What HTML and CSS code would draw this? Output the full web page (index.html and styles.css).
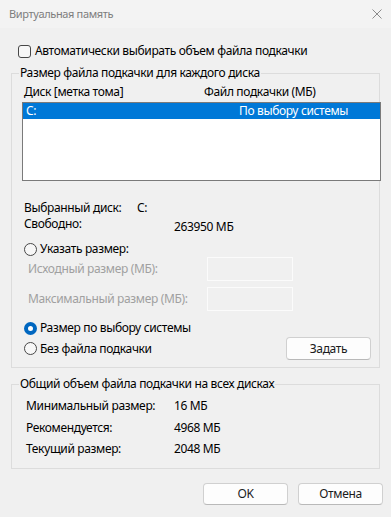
FILE: index.html
```html
<!DOCTYPE html>
<html lang="ru">
<head>
	<meta charset="UTF-8">
	<title>Виртуальная память</title>
	<link rel="stylesheet" href="styles.css">
</head>
<body>
	<div class="window">
		<div class="titlebar">
			<span class="title">Виртуальная память</span>
			<svg class="close" width="10" height="10" viewBox="0 0 10 10">
				<path d="M0.5 0.5 L9.5 9.5 M9.5 0.5 L0.5 9.5" stroke="#8b8b8b" stroke-width="1" fill="none"/>
			</svg>
		</div>
		<div class="dialog">
			<div class="check-row">
				<span class="checkbox"></span>
				<span>Автоматически выбирать объем файла подкачки</span>
			</div>

			<fieldset class="group group-drives">
				<legend>Размер файла подкачки для каждого диска</legend>
				<div class="list-head">
					<span class="col-drive">Диск [метка тома]</span>
					<span>Файл подкачки (МБ)</span>
				</div>
				<div class="listbox">
					<div class="list-row selected">
						<span class="cell-drive">C:</span>
						<span>По выбору системы</span>
					</div>
				</div>

				<div class="info-row first">
					<span class="info-label short">Выбранный диск:</span>
					<span>C:</span>
				</div>
				<div class="info-row">
					<span class="info-label wide">Свободно:</span>
					<span class="info-value low">263950 МБ</span>
				</div>

				<div class="radio-row custom">
					<span class="radio"></span>
					<span>Указать размер:</span>
				</div>
				<div class="size-row">
					<span class="size-label">Исходный размер (МБ):</span>
					<span class="textbox"></span>
				</div>
				<div class="size-row second">
					<span class="size-label">Максимальный размер (МБ):</span>
					<span class="textbox"></span>
				</div>

				<div class="radio-row system">
					<span class="radio checked"></span>
					<span>Размер по выбору системы</span>
				</div>
				<div class="last-row">
					<div class="radio-row">
						<span class="radio"></span>
						<span>Без файла подкачки</span>
					</div>
					<span class="button set">Задать</span>
				</div>
			</fieldset>

			<fieldset class="group group-total">
				<legend>Общий объем файла подкачки на всех дисках</legend>
				<div class="total-rows">
					<div class="total-row">
						<span class="total-label">Минимальный размер:</span>
						<span>16 МБ</span>
					</div>
					<div class="total-row">
						<span class="total-label">Рекомендуется:</span>
						<span>4968 МБ</span>
					</div>
					<div class="total-row">
						<span class="total-label">Текущий размер:</span>
						<span>2048 МБ</span>
					</div>
				</div>
			</fieldset>

			<div class="buttons">
				<span class="button">OK</span>
				<span class="button">Отмена</span>
			</div>
		</div>
	</div>
</body>
</html>
```

FILE: styles.css
```css
*{
	margin: 0;
	padding: 0;
	box-sizing: border-box;
}
body{
	background: #f0f0f0;
	font-family: "Noto Sans", "Open Sans", sans-serif;
	font-size: 12px;
	line-height: 16px;
	letter-spacing: -0.35px;
	color: #000;
}
.window{
	width: 391px;
	height: 517px;
	overflow: hidden;
}
.titlebar{
	height: 28px;
	background: #f3f3f3;
	display: flex;
	align-items: center;
	justify-content: space-between;
	padding: 0 9px 1px 9px;
}
.title{
	color: #7d7d7d;
	font-size: 11px;
}
.close{
	display: block;
	margin-top: 1px;
}

/* checkbox / radio */
.check-row{
	display: flex;
	align-items: center;
	gap: 4px;
	margin-top: 15px;
	padding-left: 18px;
	height: 16px;
}
.checkbox{
	width: 13px;
	height: 13px;
	border: 1px solid #474747;
	border-radius: 3px;
	background: #f7f7f7;
}
.radio-row{
	display: flex;
	align-items: center;
	gap: 3px;
	height: 16px;
}
.radio{
	width: 13px;
	height: 13px;
	border: 1px solid #474747;
	border-radius: 50%;
	background: #f7f7f7;
}
.radio.checked{
	border: 4px solid #0067c0;
	background: #fff;
}

/* group boxes */
.group{
	border: 1px solid #dcdcdc;
	margin: 6px 11px 0 11px;
	padding: 0 0 7px 0;
	min-width: 0;
}
.group legend{
	margin-left: 7px;
	padding: 0 1px;
	line-height: 16px;
}
.list-head{
	display: flex;
	margin-top: 3px;
	padding-left: 12px;
}
.col-drive{
	width: 180px;
}
.listbox{
	width: 359px;
	height: 79px;
	margin: 2px 0 0 10px;
	border: 1px solid #7a7a7a;
	background: #fff;
}
.list-row{
	display: flex;
	height: 16px;
	padding-left: 3px;
}
.list-row.selected{
	background: #0078d7;
	color: #fff;
}
.cell-drive{
	width: 213px;
}

.info-row{
	display: flex;
	align-items: flex-start;
	padding-left: 12px;
}
.info-row.first{
	margin-top: 19px;
}
.info-label.short{
	width: 113px;
}
.info-label.wide{
	width: 150px;
}
.info-value.low{
	margin-top: 3px;
}

.radio-row.custom{
	margin-top: 6px;
	padding-left: 12px;
}
.size-row{
	display: flex;
	align-items: center;
	height: 24px;
	padding-left: 16px;
	color: #a0a0a0;
}
.size-row.second{
	margin-top: 6px;
}
.size-label{
	width: 179px;
}
.textbox{
	width: 86px;
	height: 24px;
	border: 1px solid #fbfbfb;
	background: #f0f0f0;
}
.radio-row.system{
	margin-top: 9px;
	padding-left: 12px;
}
.last-row{
	display: flex;
	align-items: center;
	justify-content: space-between;
	margin-top: 1px;
	padding: 0 8px 0 12px;
}

.button{
	width: 85px;
	height: 23px;
	display: flex;
	align-items: center;
	justify-content: center;
	background: #fdfdfd;
	border: 1px solid #d0d0d0;
	border-bottom-color: #b9b9b9;
	border-radius: 4px;
	color: #1b1b1b;
}

.group-total{
	margin-top: 8px;
	padding-bottom: 11px;
}
.total-rows{
	display: flex;
	flex-direction: column;
	gap: 5.5px;
	margin-top: 6px;
	padding-left: 14px;
}
.total-row{
	display: flex;
}
.total-label{
	width: 148px;
}

.buttons{
	display: flex;
	justify-content: flex-end;
	gap: 10px;
	margin-top: 14px;
	padding-right: 8px;
}
.buttons .button{
	height: 22px;
}
```
